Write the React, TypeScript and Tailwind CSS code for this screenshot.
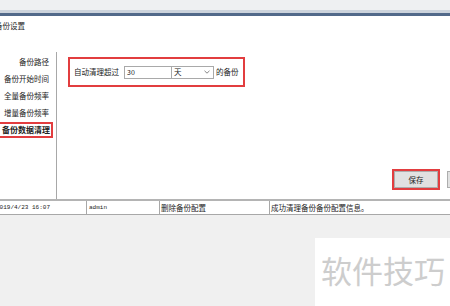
import React from 'react';

const NAV_ITEMS = ['备份路径', '备份开始时间', '全量备份频率', '增量备份频率'];

function Chevron() {
  return (
    <svg width="6" height="4" viewBox="0 0 6 4" fill="none" stroke="#666" strokeWidth="0.8">
      <path d="M0.5 0.8L3 3.2L5.5 0.8" />
    </svg>
  );
}

export default function App() {
  return (
    <div className="w-[450px] h-[306px] overflow-hidden bg-[#f0f0f0] text-[#222] font-['Noto_Sans_CJK_SC','Noto_Sans',sans-serif]">
      {/* window is cropped: starts 10px left of the viewport */}
      <div className="-ml-[10px] w-[520px] flex flex-col">
        <div className="h-[10px] bg-[#eef0f2]" />
        <div className="h-[3px] bg-[#ccd3dc]" />
        <div className="h-[3px] bg-[#52698a]" />

        <div className="bg-white h-[183px] flex flex-col">
          <div className="h-[36px] pl-[5px] pt-[5px] text-[7.5px] leading-[10px]">备份设置</div>

          <div className="flex flex-1">
            {/* left nav */}
            <div className="w-[67px] border-r border-[#a8a8a8] flex flex-col items-end pt-[1px] pr-[3px]">
              {NAV_ITEMS.map((item) => (
                <div key={item} className="h-[17px] pr-[4px] flex items-center text-[7.5px] leading-none">
                  {item}
                </div>
              ))}
              <div className="w-full h-[16px] mt-[1px] border-2 border-[#e23d3f] flex items-center justify-end pr-[1px] text-[8px] font-bold leading-none">
                备份数据清理
              </div>
            </div>

            {/* content */}
            <div className="flex-1 flex flex-col">
              <div className="ml-[11px] mt-[5px] w-[177px] h-[30px] border-2 border-[#e23d3f] flex items-center pl-[4px] text-[7.5px] leading-none">
                <span>自动清理超过</span>
                <div className="ml-[5px] w-[48px] h-[13px] border border-[#a9a9a9] flex items-center pl-[2px] text-[7px]">30</div>
                <div className="w-[42px] h-[13px] border border-l-0 border-[#a9a9a9] flex items-center justify-between pl-[2px] pr-[3px]">
                  <span>天</span>
                  <Chevron />
                </div>
                <span className="ml-[2px]">的备份</span>
              </div>

              <div className="mt-auto mb-[9px] flex justify-end items-center gap-[7px] pr-[19px]">
                <div className="border-2 border-[#e23d3f]">
                  <button className="w-[44px] h-[17px] border border-[#adadad] bg-[#e1e1e1] text-[7.5px] leading-none flex items-center justify-center">
                    保存
                  </button>
                </div>
                <button className="w-[44px] h-[17px] border border-[#adadad] bg-[#e1e1e1] text-[7.5px] leading-none flex items-center justify-center">
                  取消
                </button>
              </div>
            </div>
          </div>
        </div>

        {/* log row */}
        <div className="h-[16px] bg-white border-t-2 border-b border-t-[#b4b4b4] border-b-[#a8a8a8] flex text-[7.5px] leading-none">
          <div className="w-[97px] border-r border-[#a8a8a8] flex items-center pl-[6px] font-['Liberation_Mono',monospace] text-[6px]">
            2019/4/23 16:07
          </div>
          <div className="w-[73px] border-r border-[#a8a8a8] flex items-center pl-[2px] font-['Liberation_Mono',monospace] text-[6px]">
            admin
          </div>
          <div className="w-[110px] border-r border-[#a8a8a8] flex items-center pl-[1px]">删除备份配置</div>
          <div className="flex-1 flex items-center pl-[1px]">成功清理备份备份配置信息。</div>
        </div>

        {/* empty area with watermark */}
        <div className="h-[91px] pt-[23px]">
          <div className="ml-[325px] h-[68px] bg-white pl-[6px] pt-[16px] text-[31px] leading-[31px] text-[#cdcdcd]">
            软件技巧
          </div>
        </div>
      </div>
    </div>
  );
}
